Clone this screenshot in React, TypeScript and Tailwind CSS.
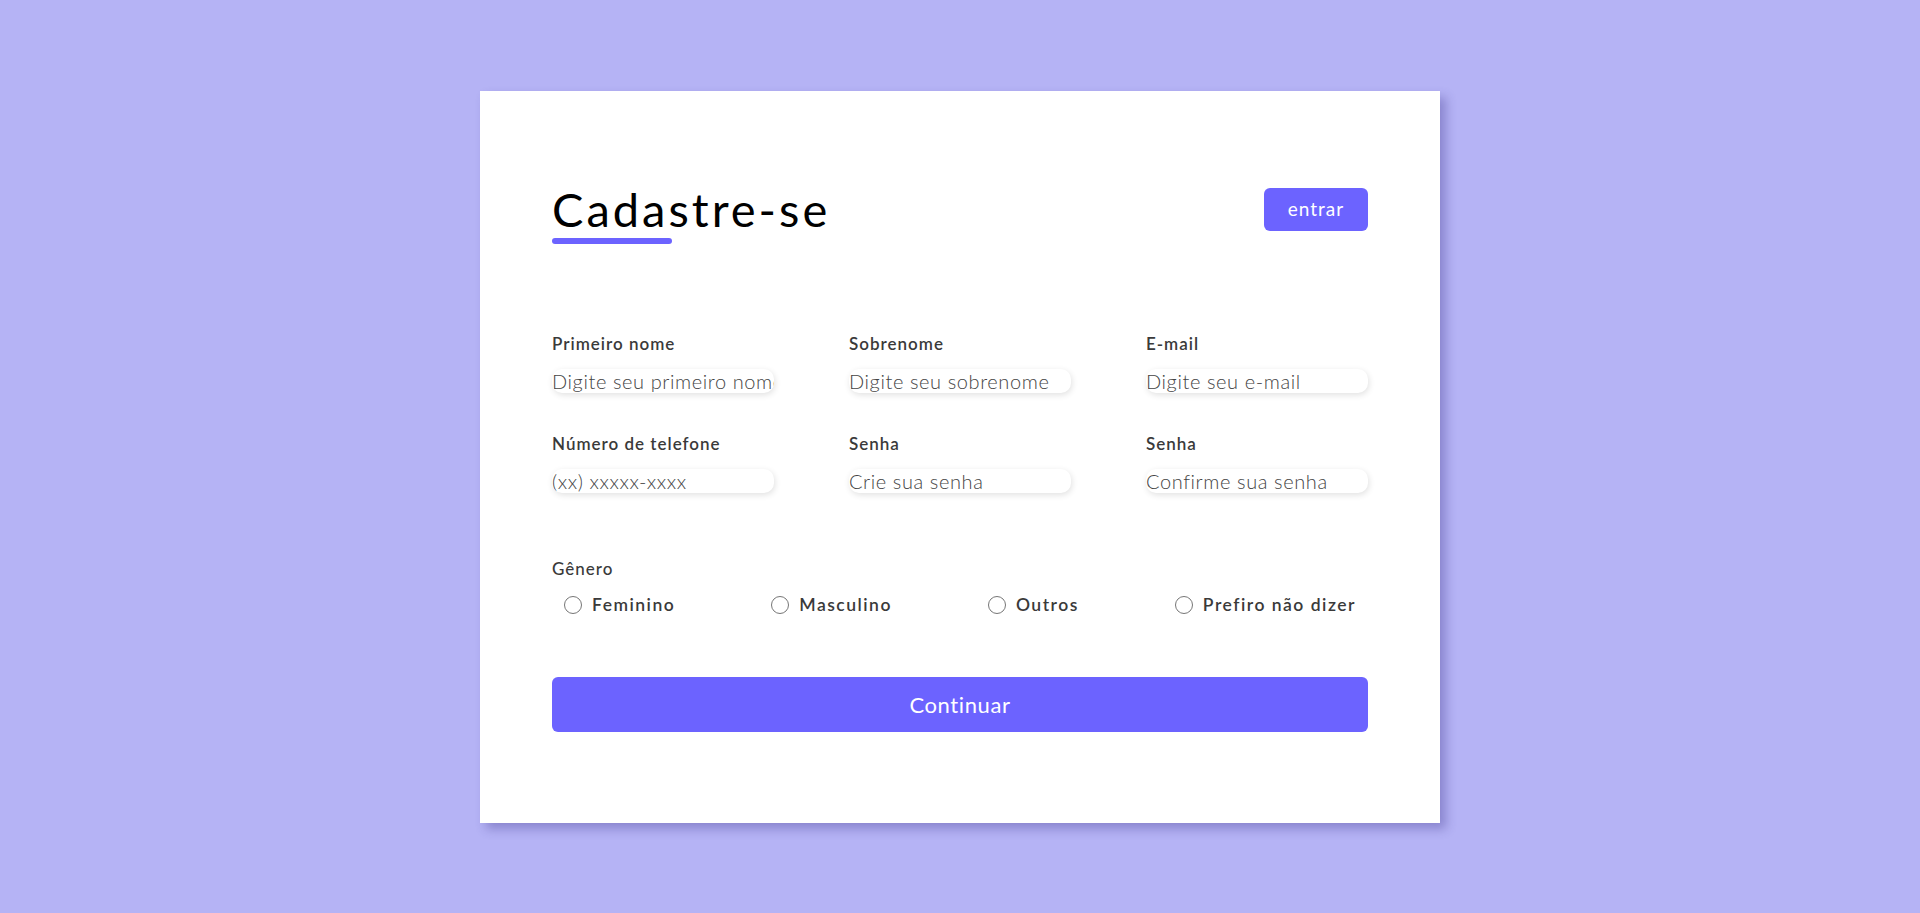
import React from "react";

const font = { fontFamily: "Lato, 'Open Sans', sans-serif" };

function Field({ label, placeholder }: { label: string; placeholder: string }) {
  return (
    <div className="w-[222px] flex flex-col">
      <label className="text-[17px] leading-[20px] font-semibold tracking-[1px] text-[#3a3a3a]">{label}</label>
      <input
        className="mt-[15px] h-[24px] w-full rounded-[10px] border-0 bg-white p-0 text-[20px] font-light tracking-[0.6px] text-[#444] placeholder:text-[#444] outline-none shadow-[1px_2px_6px_rgba(0,0,0,0.12)]"
        placeholder={placeholder}
      />
    </div>
  );
}

function Radio({ label }: { label: string }) {
  return (
    <label className="flex items-center gap-[10px]">
      <span className="block h-[18px] w-[18px] rounded-full border-[1.5px] border-[#767676] bg-white" />
      <span className="text-[17.5px] leading-[20px] font-semibold tracking-[1.5px] text-[#3a3a3a]">{label}</span>
    </label>
  );
}

export default function App() {
  return (
    <div className="min-h-screen w-full bg-[#b5b3f5] flex items-center justify-center" style={font}>
      <div className="w-[960px] bg-white px-[72px] pt-[94px] pb-[91px] shadow-[6px_6px_10px_rgba(40,30,120,0.3)]">
        <div className="flex items-start justify-between">
          <div className="flex flex-col">
            <h1 className="text-[47px] leading-[48px] font-normal tracking-[3px] text-black">Cadastre-se</h1>
            <div className="mt-[5px] h-[6px] w-[120px] rounded-full bg-[#6c63ff]" />
          </div>
          <button className="mt-[3px] h-[43px] w-[104px] rounded-[6px] bg-[#6c63ff] text-[19px] tracking-[1px] text-white">
            entrar
          </button>
        </div>

        <div className="mt-[90px] flex flex-wrap justify-between gap-y-[41px]">
          <Field label="Primeiro nome" placeholder="Digite seu primeiro nome" />
          <Field label="Sobrenome" placeholder="Digite seu sobrenome" />
          <Field label="E-mail" placeholder="Digite seu e-mail" />
          <Field label="Número de telefone" placeholder="(xx) xxxxx-xxxx" />
          <Field label="Senha" placeholder="Crie sua senha" />
          <Field label="Senha" placeholder="Confirme sua senha" />
        </div>

        <div className="mt-[66px]">
          <div className="text-[17px] leading-[20px] font-medium tracking-[1px] text-[#3a3a3a]">Gênero</div>
          <div className="mt-[16px] flex justify-between px-[12px]">
            <Radio label="Feminino" />
            <Radio label="Masculino" />
            <Radio label="Outros" />
            <Radio label="Prefiro não dizer" />
          </div>
        </div>

        <button className="mt-[62px] h-[55px] w-full rounded-[6px] bg-[#6c63ff] text-[22px] tracking-[0.6px] text-white">
          Continuar
        </button>
      </div>
    </div>
  );
}
